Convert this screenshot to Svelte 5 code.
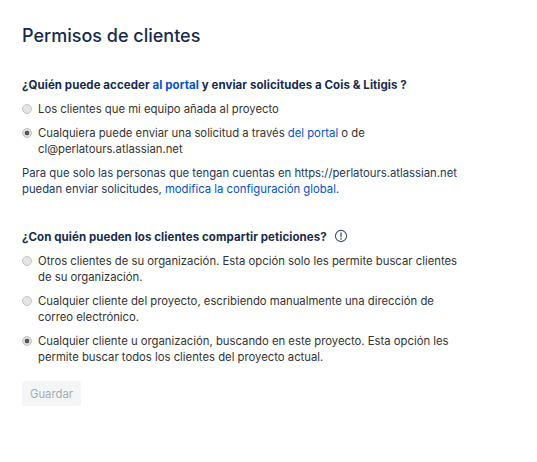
<script lang="ts">
  const shareOptions = [
    {
      text: "Otros clientes de su organización. Esta opción solo les permite buscar clientes de su organización.",
      checked: false,
    },
    {
      text: "Cualquier cliente del proyecto, escribiendo manualmente una dirección de correo electrónico.",
      checked: false,
    },
    {
      text: "Cualquier cliente u organización, buscando en este proyecto. Esta opción les permite buscar todos los clientes del proyecto actual.",
      checked: true,
    },
  ];
</script>

<main class="page">
  <h1>Permisos de clientes</h1>

  <section class="access">
    <h2>¿Quién puede acceder <a href="#portal">al portal</a> y enviar solicitudes a Cois &amp; Litigis ?</h2>
    <label class="option">
      <input type="radio" name="access" />
      <span>Los clientes que mi equipo añada al proyecto</span>
    </label>
    <label class="option">
      <input type="radio" name="access" checked />
      <span>Cualquiera puede enviar una solicitud a través <a href="#portal">del portal</a> o de<br />cl@perlatours.atlassian.net</span>
    </label>
    <p>
      Para que solo las personas que tengan cuentas en https://perlatours.atlassian.net<br />
      puedan enviar solicitudes, <a href="#config">modifica la configuración global</a>.
    </p>
  </section>

  <section class="share">
    <h2>
      ¿Con quién pueden los clientes compartir peticiones?
      <svg class="info" width="14" height="14" viewBox="0 0 14 14" fill="none" aria-hidden="true">
        <circle cx="7" cy="7" r="5.6" stroke="#42526e" stroke-width="1.1" />
        <path d="M7 3.9V7.8" stroke="#42526e" stroke-width="1.3" stroke-linecap="round" />
        <circle cx="7" cy="9.9" r="0.8" fill="#42526e" />
      </svg>
    </h2>
    {#each shareOptions as option}
      <label class="option">
        <input type="radio" name="share" checked={option.checked} />
        <span>{option.text}</span>
      </label>
    {/each}
  </section>

  <button type="button" disabled>Guardar</button>
</main>

<style>
  :global(body) {
    margin: 0;
    background: #fff;
  }

  .page {
    box-sizing: border-box;
    width: 537px;
    height: 462px;
    padding: 25px 22px 0;
    font-family: Inter, "Liberation Sans", sans-serif;
    font-size: 11.3px;
    line-height: 16px;
    color: #172b4d;
    -webkit-font-smoothing: antialiased;
  }

  h1 {
    margin: 0;
    font-size: 18px;
    line-height: 22px;
    font-weight: 500;
    color: #172b4d;
  }

  h2 {
    display: flex;
    align-items: center;
    margin: 0;
    font-size: 11.5px;
    line-height: 16px;
    font-weight: 700;
    letter-spacing: 0.07px;
    white-space: pre-wrap;
  }

  a {
    color: #0052cc;
    text-decoration: none;
  }

  .access {
    margin-top: 30px;
  }

  .share {
    margin-top: 32px;
  }

  .option {
    display: flex;
    margin-top: 8px;
    width: 441px;
    color: #333;
  }

  .option input {
    appearance: none;
    box-sizing: border-box;
    flex: none;
    width: 10px;
    height: 10px;
    margin: 3px 6px 0 0;
    border: 1px solid #c4c4c4;
    border-radius: 50%;
    background: #e4e4e4;
  }

  .option input:checked {
    background: radial-gradient(circle, #555 0 2px, #dcdcdc 2.6px);
  }

  p {
    margin: 8px 0 0;
    color: #253858;
  }

  .info {
    margin: -2px 0 0 4px;
  }

  button {
    display: block;
    box-sizing: border-box;
    width: 59px;
    height: 25px;
    margin-top: 16px;
    padding: 0;
    border: none;
    border-radius: 3px;
    background: #f4f5f7;
    color: #a5adba;
    font: inherit;
  }
</style>
